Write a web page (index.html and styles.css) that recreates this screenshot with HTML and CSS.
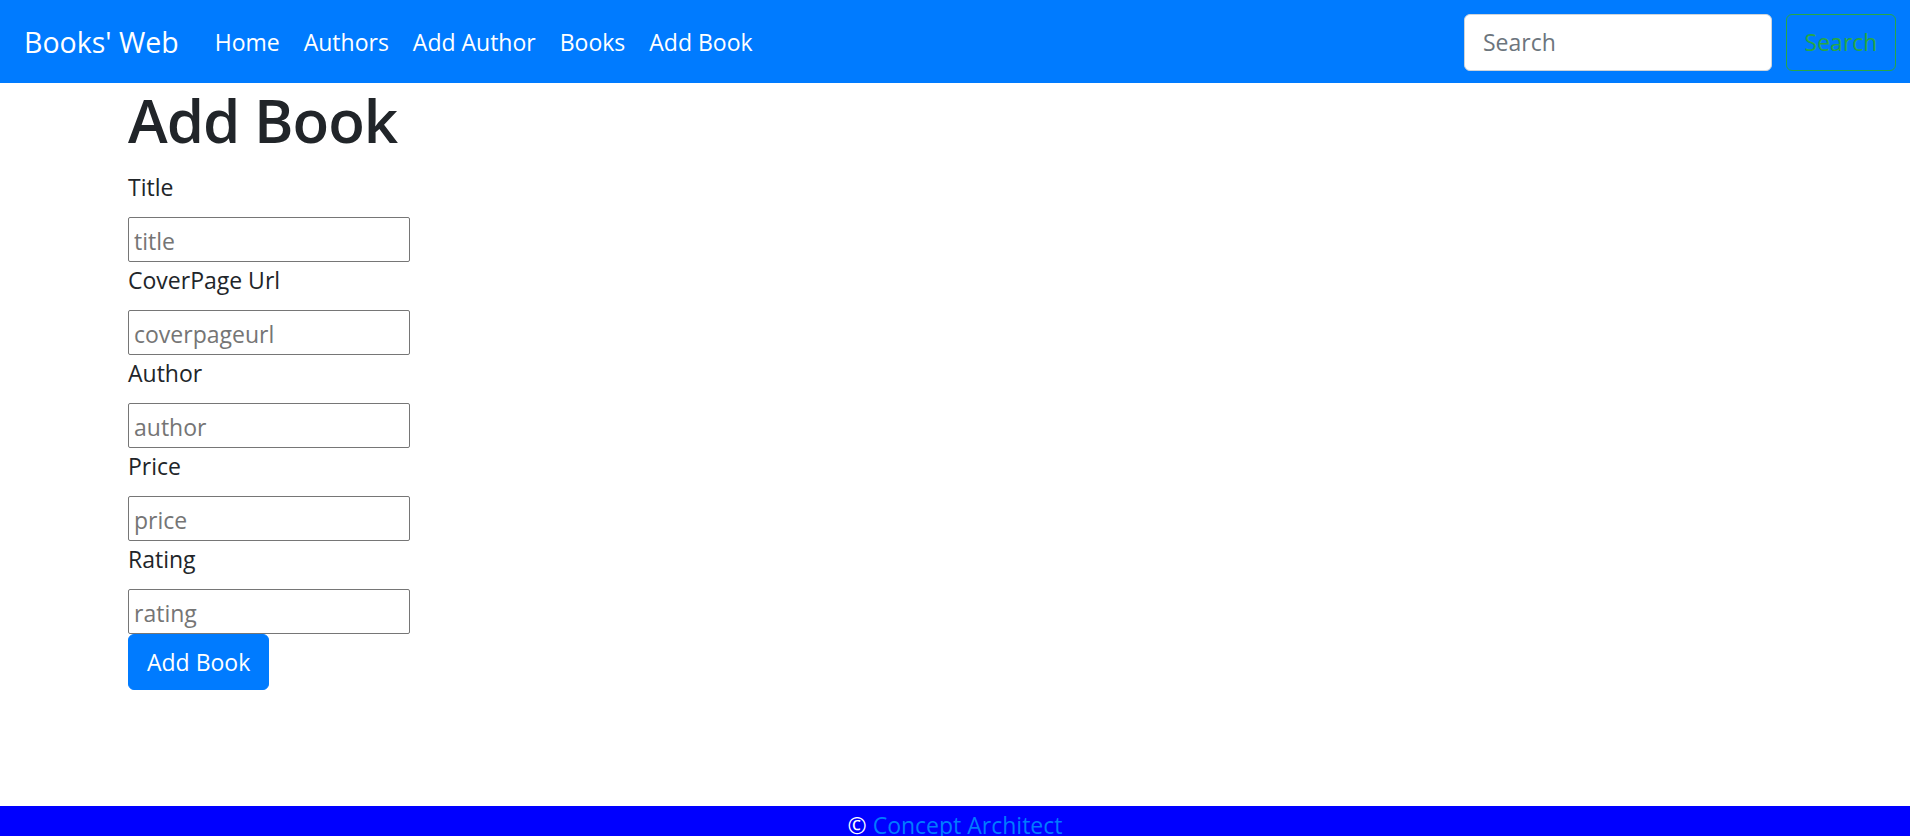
FILE: index.html
```html
<!DOCTYPE html>
<html lang="en">
<head>
<meta charset="utf-8">
<title>Books' Web</title>
<link rel="stylesheet" href="styles.css">
</head>
<body>
<nav class="navbar">
  <a class="brand" href="#">Books' Web</a>
  <ul class="nav-links">
    <li><a href="#">Home</a></li>
    <li><a href="#">Authors</a></li>
    <li><a href="#">Add Author</a></li>
    <li><a href="#">Books</a></li>
    <li><a href="#">Add Book</a></li>
  </ul>
  <form class="search-form">
    <input class="search-input" type="search" placeholder="Search">
    <button class="btn-outline-success" type="button">Search</button>
  </form>
</nav>
<main class="container">
  <h1 class="page-title">Add Book</h1>
  <form class="book-form">
    <label class="field-label">Title</label>
    <input class="field-input" type="text" placeholder="title">
    <label class="field-label">CoverPage Url</label>
    <input class="field-input" type="text" placeholder="coverpageurl">
    <label class="field-label">Author</label>
    <input class="field-input" type="text" placeholder="author">
    <label class="field-label">Price</label>
    <input class="field-input" type="text" placeholder="price">
    <label class="field-label">Rating</label>
    <input class="field-input" type="text" placeholder="rating">
    <button class="btn-primary" type="button">Add Book</button>
  </form>
</main>
<footer class="footer">
  © <a href="#">Concept Architect</a>
</footer>
</body>
</html>
```
FILE: styles.css
```css
* { box-sizing: border-box; }
html, body { margin: 0; padding: 0; }
body {
  font-family: "Open Sans", "Noto Sans", sans-serif;
  font-size: 24px;
  line-height: 1.5;
  color: #212529;
  background: #fff;
}
a { text-decoration: none; }

.navbar {
  display: flex;
  align-items: center;
  height: 83px;
  padding: 1px 14px 0 24px;
  background: #007bff;
}
.brand {
  color: #fff;
  font-size: 28.5px;
  line-height: 1.5;
  margin-right: 24px;
}
.nav-links {
  display: flex;
  list-style: none;
  margin: 0;
  padding: 0;
  flex: 1;
}
.nav-links a {
  display: block;
  color: #fff;
  padding: 12px 12px;
  font-size: 23px;
}
.search-form {
  display: flex;
  align-items: center;
}
.search-input {
  width: 308px;
  height: 57px;
  margin-right: 14px;
  padding: 9px 18px;
  font: inherit;
  font-size: 23px;
  color: #495057;
  background: #fff;
  border: 1px solid #ced4da;
  border-radius: 6px;
}
.search-input::placeholder { color: #6c757d; }
.btn-outline-success {
  width: 110px;
  height: 57px;
  padding: 0;
  font: inherit;
  font-size: 23px;
  color: #28a745;
  background: transparent;
  border: 1px solid #28a745;
  border-radius: 6px;
}

.container {
  padding: 0 128px;
}
.page-title {
  margin: 0 0 12px;
  font-size: 60px;
  font-weight: 600;
  letter-spacing: -1px;
  line-height: 74px;
}
.book-form {
  display: flex;
  flex-direction: column;
  align-items: flex-start;
}
.field-label {
  display: block;
  margin-bottom: 12px;
  line-height: 36px;
  font-size: 23px;
}
.field-input {
  width: 282px;
  height: 45px;
  padding: 2px 5px 0;
  font: inherit;
  font-size: 23px;
  color: #212529;
  border: 1px solid #767676;
  border-radius: 2px;
}
.field-input::placeholder { color: #757575; }
.btn-primary {
  height: 56px;
  padding: 9px 18px;
  font: inherit;
  font-size: 23px;
  color: #fff;
  background: #007bff;
  border: 1px solid #007bff;
  border-radius: 6px;
}

.footer {
  margin-top: 116px;
  height: 40px;
  background: #0000ff;
  color: #fff;
  text-align: center;
  line-height: 38px;
  font-size: 23px;
}
.footer a { color: #007bff; }
```
